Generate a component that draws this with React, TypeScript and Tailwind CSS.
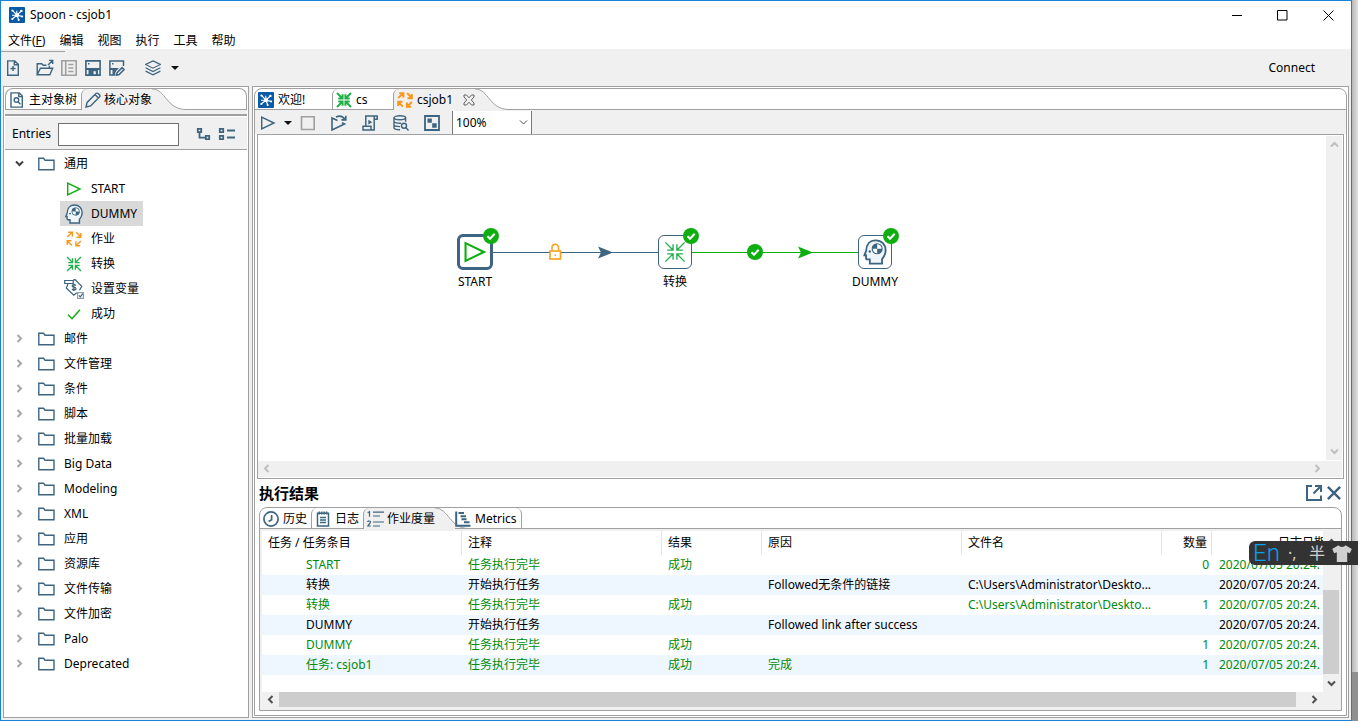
import { useState } from 'react';
import type { ReactNode } from 'react';
import clsx from 'clsx';

const SLATE = '#3d6480';
const GREEN = '#0fae10';
const ORANGE = '#f7981d';

interface IconProps {
  className?: string;
  color?: string;
}

interface SvgProps extends IconProps {
  box?: string;
  width?: number;
  children: ReactNode;
}

function Svg({ className = 'size-4', color = SLATE, box = '0 0 16 16', width = 1.4, children }: SvgProps) {
  return (
    <svg className={clsx('shrink-0', className)} viewBox={box} fill="none" stroke={color} strokeWidth={width} aria-hidden="true">
      {children}
    </svg>
  );
}

const LogoIcon = ({ className }: IconProps) => (
  <Svg className={className} color="#fff" width={1.1}>
    <rect width="16" height="16" rx="1" fill="#0a5aa5" stroke="none" />
    <path d="M8 8.2 3.5 3.5M8 8.2 12.3 4M8 8.2l5 1.2M8 8.2l1.6 4.6M8 8.2l-4.6 3.6M8 8.2l-.3-4.4M8 8.2H3" />
    <g fill="#fff" stroke="none">
      <circle cx="8.2" cy="8.2" r="2" />
      <circle cx="3.4" cy="3.5" r="1.1" />
      <circle cx="12.4" cy="3.9" r="1.2" />
      <circle cx="13.1" cy="9.6" r="1" />
      <circle cx="9.7" cy="13" r="1.1" />
      <circle cx="3.3" cy="12" r="1.1" />
    </g>
  </Svg>
);

const NewIcon = () => (
  <Svg>
    <path d="M2.7.9h7l3.6 3.3v11H2.7zM9.3.9v3.8h4M8 6v5M5.500 8.500h5" />
  </Svg>
);

const OpenIcon = () => (
  <Svg className="size-[18px]" box="0 0 18 18">
    <path d="M1.2 15.8V4.7h4.5l1.5 1.6h3.3M1.2 15.8h12.6l2.9-6.6H4.4zM13.4 9V6.8M12 6l4.3-4.2M13 1.4h3.7v3.7" />
  </Svg>
);

const ExploreIcon = () => (
  <Svg color="#a0a0a0" width={1.6}>
    <path d="M.8.8h14.4v14.4H.8zM4.7 1v14M7.2 4.500h5.300M7.200 8h5.300M7.200 11.500h5.300" />
  </Svg>
);

const SaveIcon = () => (
  <Svg width={1.6}>
    <path d="M.9.9h14.2v14.2H.9z" />
    <path d="M1 8h14v2H13v5H3.500v-5H1zM3 3h1.500v1.500H3z" fill={SLATE} stroke="none" />
    <path d="M8.500 11.200h2.300v3H8.500z" fill="#f0f0f0" stroke="none" />
  </Svg>
);

const SaveAsIcon = () => (
  <Svg width={1.5}>
    <path d="M6.500 15H.9V.9h13.600v5" />
    <path d="M1 8h9L8 10l-1.500 2-.5 3H3.500v-5H1zM3 3h1.500v1.500H3z" fill={SLATE} stroke="none" />
    <path d="m7.600 15.200.5-2.600 5-5 2 2-5 5z" fill="#f0f0f0" />
  </Svg>
);

const LayersIcon = () => (
  <Svg width={1.2}>
    <path d="M8 .9 15.4 4.5 8 8.2.6 4.5zM.6 7.8 8 11.5l7.4-3.7M.6 11.1 8 14.8l7.4-3.7" />
  </Svg>
);

const CaretIcon = () => (
  <Svg className="h-1 w-2" box="0 0 8 4">
    <path d="M0 0h8L4 4z" fill="#111" stroke="none" />
  </Svg>
);

const DocSearchIcon = () => (
  <Svg>
    <path d="M2 .9h8.3l3 3.2v11H2zM9.8 1v3.6h3.5" />
    <circle cx="7.4" cy="8" r="2.3" />
    <path d="m9 9.7 2.4 2.6" />
  </Svg>
);

const PencilIcon = () => (
  <Svg>
    <path d="m1 15 1.1-4.6L11 1.6c.7-.7 1.5-.7 2.2 0l1.2 1.2c.7.7.7 1.5 0 2.2l-8.8 8.9zM10 2.6l3.3 3.3" />
  </Svg>
);

const TreeExpandIcon = () => (
  <Svg className="size-[15px]" box="0 0 15 15" width={1.8}>
    <path d="M1.8 1.8h3.4v3.4H1.8zM9.8 8.8h3.4v3.4H9.8zM3.5 5.3v5.4h6.2" />
  </Svg>
);

const TreeCollapseIcon = () => (
  <Svg className="h-[15px] w-[18px]" box="0 0 18 15" width={1.8}>
    <path d="M1.8 1.8h3.4v3.4H1.8zM1.8 8.8h3.4v3.4H1.8zM9 3.5h8M9 10.5h8" />
  </Svg>
);

const FolderIcon = () => (
  <Svg className="h-3.5 w-[17px]" box="0 0 17 14">
    <path d="M.8 12.8V1.3h4.8l1.4 1.9h9v9.6z" />
  </Svg>
);

const PlayIcon = ({ className, color = GREEN }: IconProps) => (
  <Svg className={className} color={color}>
    <path d="M1.7 2.1 14 8 1.7 13.9z" />
  </Svg>
);

const CheckIcon = ({ className, color = GREEN }: IconProps) => (
  <Svg className={className} color={color} width={1.5}>
    <path d="m2 8.8 4 3.9 8-9" />
  </Svg>
);

const HeadIcon = ({ className }: IconProps) => (
  <Svg className={className} box="0 0 24 24" width={1.7}>
    <path
      d="M7.2 22.7v-3.9H4.7c-.8 0-1-.6-1-1.3V15H2.2l1.700-4.300C4 5 7.300 1.200 12.600 1.200c5.600 0 9.200 3.900 9.200 9.300 0 3.500-1.300 5.800-3.300 8v4.200z"
      fill="#eef6fb"
    />
    <circle cx="14" cy="9" r="4.600" fill="#fff" strokeWidth="1" />
    <path d="M14 9V4.400a4.600 4.600 0 0 0-4.600 4.600zM14 9v4.600a4.600 4.600 0 0 0 4.600-4.600z" fill={SLATE} stroke="none" />
    <circle cx="7.200" cy="11.500" r="1.100" fill={SLATE} stroke="none" />
  </Svg>
);

// arrows pointing away from the centre
const JobIcon = ({ className, width = 1.4 }: IconProps & { width?: number }) => (
  <Svg className={className} color={ORANGE} width={width}>
    <path d="M1.200 6 5.800 1.600M2.200 1.200h4.200v4.200M10.200 1.300l4.500 4.500M14.800 1.900v4.300h-4.300M14.800 10l-4.500 4.500M14.200 14.800H9.900v-4.300M5.900 14.600 1.400 10M1.200 14V9.800h4.300" />
  </Svg>
);

// arrows pointing at the centre
const TransIcon = ({ className, width = 1.3 }: IconProps & { width?: number }) => (
  <Svg className={className} color="#22b04b" width={width}>
    <path d="M1 1l5.300 5.300M6.600 2.300v4.300H2.300M15 1 9.700 6.300M9.400 2.300v4.300h4.300M1 15l5.300-5.300M6.600 13.700V9.400H2.300M15 15 9.700 9.700M9.400 13.700V9.400h4.300" />
  </Svg>
);

const VariableIcon = () => (
  <Svg className="size-5" box="0 0 20 20" width={1.2}>
    <path d="M.7 1.500h8.500v3H.7zM4 4.700 2.300 9l7.500 7.300 3-2.500M9.200 1.300l1.600-1 7 7-2.300 4" />
    <path d="M12 6.500c-1.500-1.500-4-1-3.800.6.2 1.300 3.500.8 3.800 2.400.2 1.500-2.600 2.200-4 .5M9.800 4.500v7.500" />
    <path d="M13.600 13.600h5.800v5.800h-5.800z" stroke="#8aa0b0" fill="#fff" />
    <path d="m14.900 16.400 1.400 1.500 2.500-3.300" />
  </Svg>
);

const StopIcon = () => (
  <Svg color="#a0a0a0" width={1.600}>
    <path d="M1.500 1.800h12.700v12.700H1.500z" />
  </Svg>
);

const ReplayIcon = () => (
  <Svg className="size-[18px]" box="0 0 18 18" width={1.600}>
    <path d="M7.500 6.500 2 4v12l12.500-6-2.500-1.200M6 3c3.500-1.600 6.800-.8 9 2.500M15.800 1.700v4.200h-4.400" />
  </Svg>
);

const ScriptIcon = () => (
  <Svg width={1.500}>
    <path d="M3.800 11V1h11.400v3.200h-3M12.200 4.200V15H1v-3.700h8V15M12.200 1v3.200" />
    <path d="m6.300 4.800 4 2.400-4 2.400z" fill={SLATE} stroke="none" />
  </Svg>
);

const DbSearchIcon = () => (
  <Svg>
    <ellipse cx="6.800" cy="2.800" rx="5.800" ry="2" />
    <path d="M1 2.800v10c0 1 2.500 2 6 2M12.600 2.800v4M1 6.300c0 1 2.500 1.900 7 1.900M1 9.800c0 1 2.500 1.800 6 1.800" />
    <circle cx="11" cy="10.700" r="2.500" />
    <path d="m12.800 12.600 2.700 2.900" />
  </Svg>
);

const GridIcon = () => (
  <Svg width={1.800}>
    <path d="M1 1h14v14H1z" />
    <path d="M3.500 3.500h4.300v4.300H3.500zM8.200 8.200h4.500v4.500H8.200z" fill={SLATE} stroke="none" />
  </Svg>
);

const ClockIcon = () => (
  <Svg width={1.700}>
    <circle cx="8" cy="8" r="7.100" />
    <path d="M8.600 4v4.800l-3 1.600" />
  </Svg>
);

const LogIcon = () => (
  <Svg width={1.500}>
    <path d="M2.500 2.200h11v12.900h-11zM5 6.500h6M5 9h6M5 11.500h6" />
    <path d="M4.300.5v3M6.700.5v3M9.200.5v3M11.600.5v3" />
  </Svg>
);

const NumberedIcon = () => (
  <Svg className="h-4 w-[17px]" box="0 0 17 16">
    <path d="M6 1.200h11M6 5h7M6 11h11M6 15h7M.7 1.700 2.500.7v5M.6 11c.2-1.400 3-1.400 2.800.2C3.300 12.500 1.500 13.500.8 15h3" strokeWidth="1.200" />
  </Svg>
);

const MetricsIcon = () => (
  <Svg width={2}>
    <path d="M1.200.5v14.300H15.500M3.500 2h5.500M5.500 5.200h5.500M6.500 8.200h5M9 11.200h5.500" />
  </Svg>
);

const ShirtIcon = () => (
  <Svg className="h-[17px] w-5" box="0 0 20 17">
    <path d="M6.500.3c1.500 2.300 5.500 2.300 7 0L19.800 4l-2 4.200-2.600-1V17H4.800V7.200l-2.600 1L.2 4z" fill="#d0d0d0" stroke="none" />
  </Svg>
);

type Direction = 'up' | 'down' | 'left' | 'right';

const CHEVRONS: Record<Direction, string> = {
  up: 'M1 6.500 4.500 3 8 6.500',
  down: 'M1 2.500 4.500 6 8 2.500',
  left: 'M6.500 1 3 4.500 6.500 8',
  right: 'M2.500 1 6 4.500 2.500 8',
};

function Chevron({ dir, color, width = 2 }: { dir: Direction; color: string; width?: number }) {
  return (
    <Svg className="size-[9px]" box="0 0 9 9" color={color} width={width}>
      <path d={CHEVRONS[dir]} />
    </Svg>
  );
}

// sloped right edge of the selected tab
function TabSlope() {
  return (
    <svg className="h-[21px] w-9 shrink-0" viewBox="0 0 36 21" aria-hidden="true">
      <path d="M0 0C14 0 14 20.500 34 20.500H36V21H0z" fill="#f0f0f0" />
      <path d="M0 0C14 0 14 20.500 34 20.500H36" fill="none" stroke="#a0a0a0" />
    </svg>
  );
}

interface TabProps {
  label: string;
  icon: ReactNode;
  selected?: boolean;
  first?: boolean;
  className?: string;
  children?: ReactNode;
}

function Tab({ label, icon, selected, first, className, children }: TabProps) {
  return (
    <>
      <button
        role="tab"
        aria-selected={!!selected}
        className={clsx(
          'flex h-[21px] shrink-0 items-center whitespace-nowrap',
          selected ? 'bg-[#f0f0f0]' : 'border-b pt-px',
          !first && 'rounded-tl-md border-l',
          'border-[#a0a0a0]',
          className,
        )}
      >
        {icon}
        <span>{label}</span>
        {children}
      </button>
      {selected && <TabSlope />}
    </>
  );
}

const MENU = ['编辑', '视图', '执行', '工具', '帮助'];

const GENERAL: { label: string; icon: ReactNode }[] = [
  { label: 'START', icon: <PlayIcon /> },
  { label: 'DUMMY', icon: <HeadIcon className="size-5" /> },
  { label: '作业', icon: <JobIcon /> },
  { label: '转换', icon: <TransIcon /> },
  { label: '设置变量', icon: <VariableIcon /> },
  { label: '成功', icon: <CheckIcon /> },
];

const FOLDERS = [
  '邮件', '文件管理', '条件', '脚本', '批量加载', 'Big Data', 'Modeling',
  'XML', '应用', '资源库', '文件传输', '文件加密', 'Palo', 'Deprecated',
];

interface Row {
  name: string;
  comment: string;
  result?: string;
  reason?: string;
  file?: string;
  count?: string;
}

const ROWS: Row[] = [
  { name: 'START', comment: '任务执行完毕', result: '成功', count: '0' },
  { name: '转换', comment: '开始执行任务', reason: 'Followed无条件的链接', file: 'C:\\Users\\Administrator\\Deskto...' },
  { name: '转换', comment: '任务执行完毕', result: '成功', file: 'C:\\Users\\Administrator\\Deskto...', count: '1' },
  { name: 'DUMMY', comment: '开始执行任务', reason: 'Followed link after success' },
  { name: 'DUMMY', comment: '任务执行完毕', result: '成功', count: '1' },
  { name: '任务: csjob1', comment: '任务执行完毕', result: '成功', reason: '完成', count: '1' },
];

function TitleBar() {
  return (
    <header className="bg-white">
      <div className="flex h-7 items-center pl-2">
        <LogoIcon />
        <h1 className="ml-[5px] flex-1">Spoon - csjob1</h1>
        <div className="flex">
          <button aria-label="Minimize" className="flex w-[45px] items-center justify-center">
            <Svg className="size-[11px]" box="0 0 11 11" color="#000" width={1}><path d="M0 5.500h10" /></Svg>
          </button>
          <button aria-label="Maximize" className="flex w-[45px] items-center justify-center">
            <Svg className="size-[11px]" box="0 0 11 11" color="#000" width={1}><path d="M.5.500h9.500v9.500H.5z" /></Svg>
          </button>
          <button aria-label="Close" className="flex w-[46px] items-center justify-center">
            <Svg className="size-[11px]" box="0 0 11 11" color="#000" width={1}><path d="m.5.500 10 10M10.500.500l-10 10" /></Svg>
          </button>
        </div>
      </div>
      <nav className="flex h-5 items-center gap-3.5 pt-1 pl-[7px]">
        <button>文件(<u>F</u>)</button>
        {MENU.map((item) => (
          <button key={item}>{item}</button>
        ))}
      </nav>
    </header>
  );
}

function MainToolbar() {
  return (
    <div>
      <div className="mt-0.5 h-px w-16 bg-[#a0a0a0]" />
      <div className="flex h-[34px] items-center pb-0.5 pl-1">
        <button aria-label="New"><NewIcon /></button>
        <button aria-label="Open" className="ml-[15px]"><OpenIcon /></button>
        <button aria-label="Explore repository" className="ml-[7px]"><ExploreIcon /></button>
        <button aria-label="Save" className="ml-2"><SaveIcon /></button>
        <button aria-label="Save as" className="ml-2"><SaveAsIcon /></button>
        <button aria-label="Perspective" className="ml-5 flex items-center gap-2.5">
          <LayersIcon />
          <CaretIcon />
        </button>
        <button className="mr-9 ml-auto">Connect</button>
      </div>
    </div>
  );
}

function Sidebar() {
  const [selected, setSelected] = useState('DUMMY');

  return (
    <aside className="flex w-[246px] shrink-0 flex-col border border-[#a0a0a0] bg-white p-px">
      <div className="rounded-t-lg border border-b-0 border-[#a0a0a0]">
        <div role="tablist" className="flex">
          <Tab first label="主对象树" icon={<DocSearchIcon />} className="w-[75px] gap-1 pl-[3px]" />
          <Tab selected label="核心对象" icon={<PencilIcon />} className="gap-[3px] pl-[3px]" />
          <div className="flex-1 border-b border-[#a0a0a0]" />
        </div>
      </div>
      <div className="h-1 bg-[#f0f0f0]" />
      <div className="h-0.5 bg-[#a0a0a0]" />
      <div className="mt-px flex h-8 items-center bg-[#f0f0f0] pt-0.5 pl-[7px]">
        <label htmlFor="entries" className="w-[37px]">Entries</label>
        <input id="entries" className="ml-[9px] h-[23px] w-[121px] border border-[#707070] bg-white px-1" />
        <button aria-label="Expand all" className="ml-[17px]"><TreeExpandIcon /></button>
        <button aria-label="Collapse all" className="ml-[7px]"><TreeCollapseIcon /></button>
      </div>
      <ul className="min-h-0 flex-1 overflow-hidden border-t border-[#a0a0a0] pt-px">
        <li>
          <button className="flex h-[25px] items-center pl-2.5">
            <Chevron dir="down" color="#404040" />
            <span className="mr-[9px] ml-3.5"><FolderIcon /></span>
            通用
          </button>
          <ul>
            {GENERAL.map((entry) => (
              <li key={entry.label}>
                <button
                  onClick={() => setSelected(entry.label)}
                  className={clsx('ml-[55px] flex h-[25px] items-center pr-1.5', selected === entry.label && 'bg-[#d9d9d9]')}
                >
                  <span className="flex w-[31px] justify-center pr-1">{entry.icon}</span>
                  {entry.label}
                </button>
              </li>
            ))}
          </ul>
        </li>
        {FOLDERS.map((name) => (
          <li key={name}>
            <button className="flex h-[25px] items-center pl-2.5">
              <Chevron dir="right" color="#a6a6a6" />
              <span className="mr-[9px] ml-3.5"><FolderIcon /></span>
              {name}
            </button>
          </li>
        ))}
      </ul>
    </aside>
  );
}

function EditorToolbar() {
  return (
    <div className="flex h-6 items-center bg-[#f0f0f0] pt-px pl-[5px]">
      <button aria-label="Run" className="flex items-center gap-2">
        <PlayIcon color={SLATE} />
        <CaretIcon />
      </button>
      <button aria-label="Stop" className="ml-2"><StopIcon /></button>
      <button aria-label="Replay" className="ml-3.5"><ReplayIcon /></button>
      <button aria-label="SQL script" className="ml-3.5"><ScriptIcon /></button>
      <button aria-label="Explore database" className="ml-[15px]"><DbSearchIcon /></button>
      <button aria-label="Snap to grid" className="ml-[15px]"><GridIcon /></button>
      <div className="relative ml-3">
        <select aria-label="Zoom" className="block h-[23px] w-20 appearance-none border-x border-[#7a7a7a] bg-white pl-[3px] text-xs">
          <option>100%</option>
        </select>
        <span className="pointer-events-none absolute top-[7px] right-1">
          <Chevron dir="down" color="#505050" width={1} />
        </span>
      </div>
    </div>
  );
}

const Badge = ({ className }: IconProps) => (
  <Svg className={clsx('absolute size-4', className)} color="#fff" width={2}>
    <circle cx="8" cy="8" r="8" fill={GREEN} stroke="none" />
    <path d="m4.500 8.200 2.500 2.500 4.700-5" />
  </Svg>
);

interface NodeProps {
  label: string;
  place: string;
  thick?: boolean;
  children: ReactNode;
}

function JobNode({ label, place, thick, children }: NodeProps) {
  return (
    <div className={clsx('absolute top-[99px] flex w-20 flex-col items-center', place)}>
      <div
        className={clsx(
          'relative flex items-center justify-center rounded-md border-[#3d6480] bg-white',
          thick ? 'size-9 border-3' : 'my-px size-[34px] border',
        )}
      >
        {children}
        <Badge className={thick ? '-top-[9px] -right-[9px]' : '-top-2 -right-2'} />
      </div>
      <span className="mt-0.5 leading-5">{label}</span>
    </div>
  );
}

function Canvas() {
  return (
    <div className="mx-0.5 flex min-h-0 flex-1 flex-col border border-[#a0a0a0] bg-white pr-px pb-px">
      <div className="flex min-h-0 flex-1">
        <div className="relative flex-1 overflow-hidden">
          <svg className="absolute top-[107px] left-[218px] h-5 w-[400px]" viewBox="0 0 400 20" aria-hidden="true">
            <path d="M0 10.500h200" stroke={SLATE} />
            <path d="M200 10.500h200" stroke={GREEN} />
            <path d="m122 4.500 15 6-15 6 3-6z" fill={SLATE} />
            <path d="m322 4.500 15 6-15 6 3-6z" fill={GREEN} />
            <rect x="74" y="9" width="10.500" height="8" fill="#fff" stroke="#f9a01b" strokeWidth="1.600" />
            <path d="M76 8.500V5.500a3.200 3.200 0 0 1 6.500 0v3" fill="none" stroke="#f9a01b" strokeWidth="1.500" />
            <path d="M78.500 12.500h1.500v1.500h-1.500z" fill="#f9a01b" />
          </svg>
          <Badge className="top-[109px] left-[489px]" />
          <JobNode label="START" place="left-[177px]" thick>
            <PlayIcon className="size-6" />
          </JobNode>
          <JobNode label="转换" place="left-[377px]">
            <TransIcon className="size-[22px]" width={1} />
          </JobNode>
          <JobNode label="DUMMY" place="left-[577px]">
            <HeadIcon className="size-[26px]" />
          </JobNode>
        </div>
        <div className="my-px flex w-4 flex-col items-center justify-between bg-[#f0f0f0] py-1">
          <Chevron dir="up" color="#bfbfbf" />
          <Chevron dir="down" color="#bfbfbf" />
        </div>
      </div>
      <div className="flex h-4 items-center justify-between bg-[#f0f0f0] pr-5 pb-px pl-1">
        <Chevron dir="left" color="#bfbfbf" />
        <Chevron dir="right" color="#bfbfbf" />
      </div>
    </div>
  );
}

const TH = 'border-r border-[#e5e5e5] p-0 pl-1.5 text-left font-normal';

function ResultTable() {
  return (
    <table className="w-[1068px] table-fixed border-separate border-spacing-0 whitespace-nowrap">
      <colgroup>
        <col className="w-[200px]" />
        <col className="w-[200px]" />
        <col className="w-[100px]" />
        <col className="w-[200px]" />
        <col className="w-[200px]" />
        <col className="w-[50px]" />
        <col className="w-[118px]" />
      </colgroup>
      <thead>
        <tr className="h-6">
          <th className={TH}>任务 / 任务条目</th>
          <th className={TH}>注释</th>
          <th className={TH}>结果</th>
          <th className={TH}>原因</th>
          <th className={TH}>文件名</th>
          <th className="border-r border-[#e5e5e5] p-0 pr-1 text-right font-normal">数量</th>
          <th className="p-0 pr-1 text-right font-normal">日志日期</th>
        </tr>
      </thead>
      <tbody>
        {ROWS.map((row, i) => (
          <tr key={i} className={clsx('h-5', i % 2 === 1 && 'bg-[#eef6ff]', row.comment === '任务执行完毕' && 'text-[#008a0e]')}>
            <td className="p-0 pl-11">{row.name}</td>
            <td className="p-0 pl-1.5">{row.comment}</td>
            <td className="p-0 pl-1.5">{row.result}</td>
            <td className="p-0 pl-1.5">{row.reason}</td>
            <td className="p-0 pl-1.5">{row.file}</td>
            <td className="p-0 pr-[3px] text-right">{row.count}</td>
            <td className="p-0 pl-[7px]">2020/07/05 20:24.</td>
          </tr>
        ))}
      </tbody>
    </table>
  );
}

function Results() {
  return (
    <section className="mx-1 mb-1 flex h-[232px] shrink-0 flex-col">
      <div className="flex h-7 items-center">
        <h2 className="flex-1 text-[15px] font-bold">执行结果</h2>
        <button aria-label="Detach">
          <Svg width={2}><path d="M6 1H1v14h14v-4.500M15 7V1H9M14.500 1.500 7.500 8.500" /></Svg>
        </button>
        <button aria-label="Close results" className="ml-[5px] pr-px">
          <Svg className="size-3.5" width={2.800}><path d="m1 1 14 14M15 1 1 15" /></Svg>
        </button>
      </div>
      <div className="flex min-h-0 flex-1 flex-col rounded-t-lg border border-[#a0a0a0]">
        <div role="tablist" className="flex shrink-0">
          <Tab first label="历史" icon={<ClockIcon />} className="w-[51px] gap-1 pl-[3px]" />
          <Tab label="日志" icon={<LogIcon />} className="w-[52px] gap-1 pl-[3px]" />
          <Tab selected label="作业度量" icon={<NumberedIcon />} className="gap-[3px] pl-[3px]" />
          <div className="-ml-5 flex rounded-tr-md border-r border-[#a0a0a0] pl-1">
            <button role="tab" aria-selected={false} className="flex h-[21px] items-center gap-1 border-b border-[#a0a0a0] pt-px pr-1">
              <MetricsIcon />
              Metrics
            </button>
          </div>
          <div className="flex-1 border-b border-[#a0a0a0]" />
        </div>
        <div className="flex min-h-0 flex-1 flex-col bg-[#f0f0f0] p-0.5">
          <div className="flex min-h-0 flex-1">
            <div className="min-w-0 flex-1 overflow-hidden bg-white">
              <ResultTable />
            </div>
            <div className="flex w-4 flex-col items-center pt-1.5 pb-1">
              <Chevron dir="up" color="#505050" />
              <div className="mt-11 mb-[5px] w-4 flex-1 bg-[#cdcdcd]" />
              <Chevron dir="down" color="#505050" />
            </div>
          </div>
          <div className="flex h-4 shrink-0 items-center pr-5 pb-px pl-1">
            <Chevron dir="left" color="#505050" />
            <div className="mr-3.5 ml-1 h-[15px] flex-1 bg-[#cdcdcd]" />
            <Chevron dir="right" color="#505050" />
          </div>
        </div>
      </div>
    </section>
  );
}

function Editor() {
  return (
    <main className="flex min-w-0 flex-1 flex-col border border-[#a0a0a0] bg-white p-px">
      <div className="flex min-h-0 flex-1 flex-col rounded-t-lg border border-[#a0a0a0]">
        <div role="tablist" className="flex shrink-0">
          <Tab first label="欢迎!" icon={<LogoIcon />} className="w-[77px] gap-1 pl-[3px]" />
          <Tab label="cs" icon={<TransIcon width={2} />} className="w-[61px] gap-1 pl-[3px]" />
          <Tab selected label="csjob1" icon={<JobIcon width={2} />} className="gap-1 pl-[3px]">
            <Svg className="ml-1.5 size-3" box="0 0 12 12" color="#606060" width={1}>
              <path d="M1 1h2.500L6 3.800 8.500 1H11v2L8.300 6 11 9v2H8.500L6 8.200 3.500 11H1V9l2.700-3L1 3z" />
            </Svg>
          </Tab>
          <div className="flex-1 border-b border-[#a0a0a0]" />
        </div>
        <EditorToolbar />
        <Canvas />
        <Results />
      </div>
    </main>
  );
}

function ImeBar() {
  return (
    <div className="absolute top-[541px] right-0 flex h-6 w-[109px] items-center rounded-l-md bg-[#333] pl-1 text-[#d0d0d0]">
      <span className="w-[35px] font-['Roboto',sans-serif] text-2xl leading-6 font-light text-[#0aa0f0]">En</span>
      <span className="w-[21px] text-base leading-6">·,</span>
      <span className="mr-[7px] text-base leading-6">半</span>
      <ShirtIcon />
    </div>
  );
}

export default function App() {
  return (
    <div className="relative flex h-screen min-h-[600px] overflow-hidden bg-[#e2e2e2] font-['Noto_Sans','Noto_Sans_CJK_SC',sans-serif] text-xs leading-4 text-black">
      <div className="flex min-w-0 flex-1 flex-col border border-[#1883d7] bg-[#f0f0f0]">
        <TitleBar />
        <MainToolbar />
        <div className="flex min-h-0 flex-1 gap-[3px] pr-0.5 pb-0.5 pl-0.5">
          <Sidebar />
          <Editor />
        </div>
      </div>
      <div className="flex w-1.5 shrink-0 flex-col justify-end bg-linear-to-r from-[#b8b8b8] to-[#e2e2e2]">
        <div className="h-[49px] bg-[#909090]" />
      </div>
      <ImeBar />
    </div>
  );
}
